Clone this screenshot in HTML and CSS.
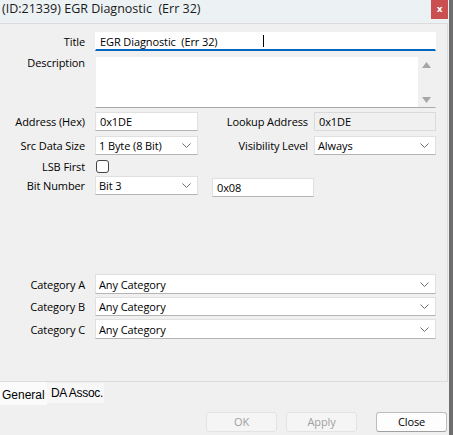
FILE: index.html
```html
<!DOCTYPE html>
<html>
<head>
<meta charset="utf-8">
<link rel="stylesheet" href="styles.css">
</head>
<body>
<div class="window">
  <div class="titlebar">
    <span class="title-text">(ID:21339) EGR Diagnostic&nbsp; (Err 32)</span>
    <span class="close-btn">x</span>
  </div>
  <div class="panel">
    <div class="row row-title">
      <span class="label">Title</span>
      <div class="field field-title"><span class="val">EGR Diagnostic&nbsp; (Err 32)</span><span class="caret"></span></div>
    </div>
    <div class="row row-desc">
      <span class="label label-top">Description</span>
      <div class="field field-desc">
        <div class="scroll">
          <svg width="9" height="6" viewBox="0 0 9 6"><polygon points="4.5,0 9,6 0,6" fill="#a6a6a6"/></svg>
          <svg width="9" height="6" viewBox="0 0 9 6"><polygon points="0,0 9,0 4.5,6" fill="#a6a6a6"/></svg>
        </div>
      </div>
    </div>
    <div class="row row-addr">
      <span class="label">Address (Hex)</span>
      <div class="field field-short"><span class="val">0x1DE</span></div>
      <span class="label2">Lookup Address</span>
      <div class="field field-right disabled"><span class="val">0x1DE</span></div>
    </div>
    <div class="row row-src">
      <span class="label">Src Data Size</span>
      <div class="field field-short combo"><span class="val">1 Byte (8 Bit)</span><svg class="chev" width="9" height="5" viewBox="0 0 9 5"><polyline points="0.5,0.5 4.5,4.5 8.5,0.5" fill="none" stroke="#6b6b6b" stroke-width="1"/></svg></div>
      <span class="label2">Visibility Level</span>
      <div class="field field-right combo"><span class="val">Always</span><svg class="chev" width="9" height="5" viewBox="0 0 9 5"><polyline points="0.5,0.5 4.5,4.5 8.5,0.5" fill="none" stroke="#6b6b6b" stroke-width="1"/></svg></div>
    </div>
    <div class="row row-lsb">
      <span class="label">LSB First</span>
      <span class="checkbox"></span>
    </div>
    <div class="row row-bit">
      <span class="label">Bit Number</span>
      <div class="field field-short combo"><span class="val">Bit 3</span><svg class="chev" width="9" height="5" viewBox="0 0 9 5"><polyline points="0.5,0.5 4.5,4.5 8.5,0.5" fill="none" stroke="#6b6b6b" stroke-width="1"/></svg></div>
      <div class="field field-mask"><span class="val">0x08</span></div>
    </div>
    <div class="row row-cata">
      <span class="label">Category A</span>
      <div class="field field-wide combo"><span class="val">Any Category</span><svg class="chev" width="9" height="5" viewBox="0 0 9 5"><polyline points="0.5,0.5 4.5,4.5 8.5,0.5" fill="none" stroke="#6b6b6b" stroke-width="1"/></svg></div>
    </div>
    <div class="row row-catb">
      <span class="label">Category B</span>
      <div class="field field-wide combo"><span class="val">Any Category</span><svg class="chev" width="9" height="5" viewBox="0 0 9 5"><polyline points="0.5,0.5 4.5,4.5 8.5,0.5" fill="none" stroke="#6b6b6b" stroke-width="1"/></svg></div>
    </div>
    <div class="row row-catc">
      <span class="label">Category C</span>
      <div class="field field-wide combo"><span class="val">Any Category</span><svg class="chev" width="9" height="5" viewBox="0 0 9 5"><polyline points="0.5,0.5 4.5,4.5 8.5,0.5" fill="none" stroke="#6b6b6b" stroke-width="1"/></svg></div>
    </div>
  </div>
  <div class="tabs">
    <span class="tab tab-active">General</span>
    <span class="tab tab-other">DA Assoc.</span>
  </div>
  <div class="buttons">
    <span class="btn btn-disabled">OK</span>
    <span class="btn btn-disabled">Apply</span>
    <span class="btn btn-close">Close</span>
  </div>
</div>
<div class="edge"></div>
</body>
</html>
```

FILE: styles.css
```css
html, body {
  margin: 0;
  padding: 0;
}
body {
  width: 453px;
  height: 435px;
  overflow: hidden;
  display: flex;
  background: #f0f0f0;
  font-family: "Open Sans", "Noto Sans", sans-serif;
  font-size: 11px;
  letter-spacing: -0.1px;
  color: #000;
}
.window {
  width: 449px;
  display: flex;
  flex-direction: column;
}
.edge {
  width: 4px;
  background: #6e6e6e;
}
.titlebar {
  height: 23px;
  background: #ecf2f4;
  display: flex;
  justify-content: space-between;
  align-items: flex-start;
}
.title-text {
  padding-left: 2px;
  font-size: 12.5px;
  letter-spacing: 0;
  line-height: 17px;
  color: #1a1a1a;
}
.close-btn {
  width: 17px;
  height: 19px;
  margin-right: 1px;
  background: #c94f50;
  color: #fff;
  font-family: "DejaVu Sans", sans-serif;
  font-weight: bold;
  font-size: 9px;
  line-height: 18px;
  text-align: center;
}
.panel {
  height: 357px;
  margin-right: 1px;
  border-top: 1px solid #dcdcdc;
  border-right: 1px solid #dcdcdc;
  border-bottom: 1px solid #dcdcdc;
  display: flex;
  flex-direction: column;
}
.row {
  display: flex;
  align-items: center;
}
.label {
  width: 85px;
  text-align: right;
  margin-right: 10px;
  white-space: nowrap;
}
.label-top {
  align-self: flex-start;
  line-height: 14px;
  margin-top: 0;
}
.label2 {
  width: 110px;
  text-align: right;
  margin-right: 6px;
  white-space: nowrap;
}
.field {
  box-sizing: border-box;
  height: 100%;
  background: #fff;
  border: 1px solid #e0e0e0;
  border-bottom-color: #b4b4b4;
  display: flex;
  align-items: center;
  padding-left: 4px;
  position: relative;
}
.combo {
  padding-left: 3px;
  justify-content: space-between;
  padding-right: 6px;
}
.val {
  white-space: nowrap;
}
.row-title { margin-top: 8px; height: 19px; }
.field-title {
  width: 341px;
  border-color: #fff;
  border-bottom: 2px solid #0067c0;
}
.caret {
  width: 1px;
  height: 12px;
  background: #000;
  margin-left: 45px;
}
.row-desc { margin-top: 5px; height: 52px; align-items: stretch; }
.field-desc {
  width: 341px;
  align-items: stretch;
  justify-content: flex-end;
  padding: 0;
  border-color: #f0f0f0;
  border-bottom-color: #a9a9a9;
}
.scroll {
  width: 17px;
  background: #f0f0f0;
  display: flex;
  flex-direction: column;
  justify-content: space-between;
  align-items: center;
  padding: 5px 0 4px 0;
}
.row-addr { margin-top: 4px; height: 19px; }
.field-short { width: 103px; }
.field-right { width: 122px; }
.disabled {
  background: #f0f0f0;
  border-color: #dadada;
}
.row-src { margin-top: 5px; height: 19px; }
.row-lsb { margin-top: 3px; height: 16px; }
.checkbox {
  box-sizing: border-box;
  width: 13px;
  height: 13px;
  margin-left: 1px;
  border: 1px solid #444;
  border-radius: 3px;
  background: #fff;
}
.row-bit { margin-top: 2px; height: 19px; }
.field-mask {
  width: 102px;
  height: 19px;
  margin-left: 14px;
  margin-top: 3px;
}
.row-cata { margin-top: 79px; height: 20px; }
.row-catb { margin-top: 3px; height: 19px; }
.row-catc { margin-top: 3px; height: 20px; }
.field-wide { width: 341px; }
.tabs {
  height: 23px;
  display: flex;
  align-items: flex-start;
  font-family: "Liberation Sans", Arial, sans-serif;
  font-size: 12px;
  letter-spacing: 0;
}
.tab {
  box-sizing: border-box;
}
.tab-active {
  width: 47px;
  height: 23px;
  background: #fbfbfb;
  padding-left: 2px;
  line-height: 27px;
}
.tab-other {
  width: 57px;
  height: 20px;
  margin-top: 1px;
  background: #f7f7f7;
  padding-left: 4px;
  line-height: 20px;
  letter-spacing: -0.3px;
}
.buttons {
  display: flex;
  justify-content: flex-end;
  gap: 9px;
  padding-top: 7px;
  padding-right: 2px;
}
.btn {
  box-sizing: border-box;
  width: 71px;
  height: 20px;
  border-radius: 3px;
  text-align: center;
  line-height: 18px;
}
.btn-disabled {
  background: #f5f5f5;
  border: 1px solid #e3e3e3;
  color: #a0a0a0;
}
.btn-close {
  margin-left: 10px;
  background: #fdfdfd;
  border: 1px solid #bdbdbd;
  border-bottom-color: #a0a0a0;
}
```
